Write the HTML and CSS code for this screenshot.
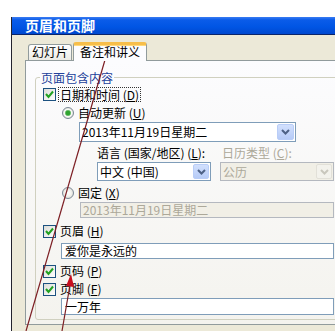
FILE: index.html
```html
<!DOCTYPE html>
<html lang="zh-CN">
<head>
<meta charset="utf-8">
<title>页眉和页脚</title>
<link rel="stylesheet" href="styles.css">
</head>
<body>
<div class="window">
  <div class="titlebar">页眉和页脚</div>
  <div class="client">
    <div class="tabs">
      <div class="tab">幻灯片</div>
      <div class="tab active">备注和讲义</div>
    </div>
    <div class="panel">
      <fieldset class="group">
        <legend>页面包含内容</legend>
        <div class="row r-date">
          <span class="check on"><svg width="11" height="11" viewBox="0 0 11 11"><polyline points="2,5 4.5,8 9,2.5" fill="none" stroke="#21a121" stroke-width="2"/></svg></span>
          <span class="lbl focus">日期和时间 (<u>D</u>)</span>
        </div>
        <div class="row r-auto">
          <span class="radio on"></span>
          <span class="lbl">自动更新 (<u>U</u>)</span>
        </div>
        <div class="combo date-combo">
          <span class="val">2013年11月19日星期二</span>
          <span class="btn"><svg width="9" height="6" viewBox="0 0 9 6"><polyline points="1,1 4.5,4.5 8,1" fill="none" stroke="#4d6185" stroke-width="2"/></svg></span>
        </div>
        <div class="pair labels">
          <span>语言 (国家/地区) (<u>L</u>):</span>
          <span class="dis">日历类型 (<u>C</u>):</span>
        </div>
        <div class="pair combos">
          <div class="combo">
            <span class="val">中文 (中国)</span>
            <span class="btn"><svg width="9" height="6" viewBox="0 0 9 6"><polyline points="1,1 4.5,4.5 8,1" fill="none" stroke="#4d6185" stroke-width="2"/></svg></span>
          </div>
          <div class="combo disabled">
            <span class="val">公历</span>
            <span class="btn"><svg width="9" height="6" viewBox="0 0 9 6"><polyline points="1,1 4.5,4.5 8,1" fill="none" stroke="#c9c7bd" stroke-width="2"/></svg></span>
          </div>
        </div>
        <div class="row r-fixed">
          <span class="radio"></span>
          <span class="lbl">固定 (<u>X</u>)</span>
        </div>
        <div class="field disabled fixed-field">2013年11月19日星期二</div>
        <div class="row r-header">
          <span class="check on"><svg width="11" height="11" viewBox="0 0 11 11"><polyline points="2,5 4.5,8 9,2.5" fill="none" stroke="#21a121" stroke-width="2"/></svg></span>
          <span class="lbl">页眉 (<u>H</u>)</span>
        </div>
        <div class="field text-field header-field">爱你是永远的</div>
        <div class="row r-page">
          <span class="check on"><svg width="11" height="11" viewBox="0 0 11 11"><polyline points="2,5 4.5,8 9,2.5" fill="none" stroke="#21a121" stroke-width="2"/></svg></span>
          <span class="lbl">页码 (<u>P</u>)</span>
        </div>
        <div class="row r-footer">
          <span class="check on"><svg width="11" height="11" viewBox="0 0 11 11"><polyline points="2,5 4.5,8 9,2.5" fill="none" stroke="#21a121" stroke-width="2"/></svg></span>
          <span class="lbl">页脚 (<u>F</u>)</span>
        </div>
        <div class="field text-field footer-field">一万年</div>
      </fieldset>
    </div>
  </div>
</div>
<svg class="annot" width="335" height="331" viewBox="0 0 335 331">
  <line x1="26" y1="331" x2="107" y2="53" stroke="#7d1f24" stroke-width="1.2"/>
  <polygon points="109.5,44 111.5,57 102,54.5" fill="#c8101e"/>
  <line x1="62" y1="331" x2="70" y2="285" stroke="#7d1f24" stroke-width="1.2"/>
  <polygon points="71,274 74,287 66,286" fill="#c8101e"/>
</svg>
</body>
</html>
```

FILE: styles.css
```css
* { box-sizing: border-box; }
html, body { margin: 0; padding: 0; }
body {
  width: 335px;
  height: 331px;
  overflow: hidden;
  position: relative;
  background: #fff;
  font-family: "Noto Sans CJK SC", "Noto Sans", sans-serif;
  font-size: 12px;
  color: #000;
}
.window {
  margin: 17px 0 0 11px;
  width: 340px;
  height: 314px;
  border-left: 1px solid #23232e;
  background: #ece9d8;
}
.titlebar {
  height: 18px;
  background: linear-gradient(#3a7cf2 0, #0a5ce9 3px, #0055e4 10px, #0048cf 17px);
  border-bottom: 1px solid #0a246a;
  color: #fff;
  font-weight: 700;
  font-size: 14px;
  line-height: 17px;
  padding-left: 13px;
  white-space: nowrap;
}
.client { padding: 7px 0 0 13px; }
.tabs {
  display: flex;
  align-items: flex-end;
  height: 18px;
  padding-left: 3px;
  position: relative;
  z-index: 1;
}
.tab {
  height: 16px;
  padding: 0 3px;
  border: 1px solid #919b9c;
  border-bottom: none;
  border-radius: 3px 3px 0 0;
  background: linear-gradient(#ffffff, #ecebe5);
  line-height: 14px;
  white-space: nowrap;
}
.tab.active {
  height: 19px;
  margin-left: 1px;
  margin-bottom: -1px;
  padding: 0 6px;
  border-top: 3px solid #f7be4a;
  box-shadow: inset 0 1px 0 #ffd879;
  background: #fcfcfe;
  line-height: 14px;
}
.panel {
  height: 265px;
  border: 1px solid #919b9c;
  background: linear-gradient(#fcfcfe, #f4f3ee);
  padding-left: 9px;
}
.group {
  margin: 9px 0 0 0;
  padding: 0 0 4px 4px;
  border: 1px solid #d0d0bf;
  border-radius: 3px;
  min-width: 0;
}
.group legend {
  padding: 0 1px;
  line-height: 15px;
  color: #22409a;
}
.row {
  display: flex;
  align-items: center;
  height: 16px;
  white-space: nowrap;
}
.check {
  flex: none;
  width: 13px;
  height: 13px;
  border: 1px solid #1c5180;
  background: linear-gradient(135deg, #dcdcd7, #ffffff);
  display: flex;
  align-items: center;
  justify-content: center;
}
.radio {
  flex: none;
  width: 12px;
  height: 12px;
  border-radius: 50%;
  border: 1px solid #7b8896;
  background: radial-gradient(circle at 50% 50%, #ffffff 0, #f4f4f0 3px, #d8d8d0 6px);
}
.radio.on {
  background: radial-gradient(circle at 50% 50%, #2fa32f 0, #2fa32f 2px, #9fd49f 3px, #ffffff 3.6px, #f1f1ec 4px, #d8d8d0 6px);
}
.lbl { margin-left: 2px; padding: 0 2px; line-height: 14px; }
.lbl.focus { border: 1px dotted #333; padding: 0 1px; line-height: 13px; }
.r-date { margin-top: 1px; padding-left: 3px; }
.r-auto { margin-top: 3px; padding-left: 22px; }
.r-auto .lbl, .r-fixed .lbl { margin-left: 4px; padding: 0; }
.combo {
  display: flex;
  align-items: center;
  border: 1px solid #7f9db9;
  background: #fff;
  height: 20px;
}
.val {
  flex: 1;
  padding-left: 2px;
  line-height: 16px;
  white-space: nowrap;
  overflow: hidden;
}
.btn {
  flex: none;
  width: 17px;
  height: 16px;
  margin-right: 1px;
  border: 1px solid #b9cdf7;
  border-radius: 2px;
  background: linear-gradient(#d2e0fd, #b6cbf7);
  display: flex;
  align-items: center;
  justify-content: center;
}
.date-combo { margin: 1px 0 0 39px; width: 217px; }
.pair {
  display: grid;
  grid-template-columns: 114px 114px;
  column-gap: 9px;
  margin-left: 57px;
  white-space: nowrap;
}
.labels { margin-top: 3px; height: 15px; line-height: 15px; }
.labels .dis { padding-left: 2px; color: #aca899; }
.combos { margin-top: 2px; }
.combos .combo { height: 19px; }
.combos .btn { width: 16px; height: 15px; }
.combo.disabled { background: #f1efe6; border-color: #b4b8bf; color: #aca899; }
.combo.disabled .btn { background: #f3f2ec; border-color: #e2e0d8; }
.r-fixed { margin-top: 4px; padding-left: 22px; }
.field {
  border: 1px solid #7f9db9;
  background: #fff;
  padding-left: 3px;
  white-space: nowrap;
  overflow: hidden;
}
.fixed-field {
  margin: 1px 0 0 40px;
  width: 254px;
  height: 16px;
  line-height: 14px;
  padding-left: 2px;
  background: #f1efe6;
  border-color: #b4b8bf;
  color: #aca899;
}
.r-header { margin-top: 5px; padding-left: 3px; }
.text-field { margin-left: 21px; width: 273px; }
.header-field { margin-top: 4px; height: 16px; line-height: 14px; }
.r-page { margin-top: 4px; padding-left: 3px; }
.r-footer { margin-top: 2px; padding-left: 3px; }
.footer-field { margin-top: 1px; height: 17px; line-height: 15px; }
.annot {
  position: absolute;
  left: 0;
  top: 0;
  pointer-events: none;
}
```
